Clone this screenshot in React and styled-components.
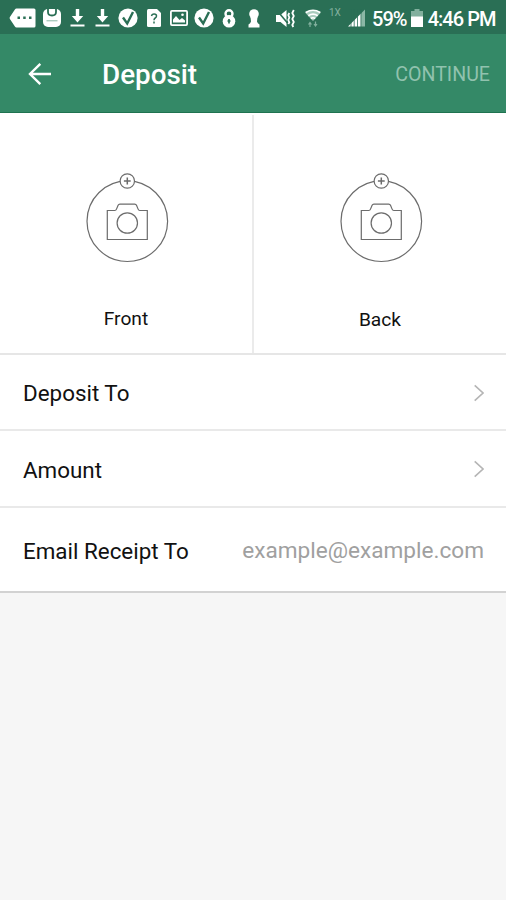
import React from "react"
import styled, { createGlobalStyle } from "styled-components"

const DownloadIcon = ({ left }) => (
    <StatusIcon width="15" height="18" viewBox="0 0 15 18" $left={left}>
        <path d="M5.800 0h3.400v7h4L7.500 13.500 1.800 7h4zM.5 15.500h14v2H.5z" fill="#fff" />
    </StatusIcon>
)

const CheckIcon = ({ left }) => (
    <StatusIcon width="20" height="20" viewBox="0 0 20 20" $left={left}>
        <circle cx="10" cy="10" r="9.600" fill="#fff" />
        <path d="M5 9.500l4.200 6L15 4" fill="none" stroke="#2a6f55" strokeWidth="2.400" />
    </StatusIcon>
)

const CameraIcon = () => (
    <svg width="85" height="92" viewBox="0 0 85 92" fill="none" stroke="#6c6c6c" strokeWidth="1.200">
        <circle cx="43.300" cy="50.200" r="40.300" />
        <path d="M23.300 39.500h7.500q1.200 0 1.700-1.400l1.600-3.800q.5-1.200 1.800-1.200h14.800q1.300 0 1.800 1.200l1.600 3.800q.5 1.400 1.700 1.400h7.500v29h-40z" />
        <circle cx="43.300" cy="52" r="10.200" />
        <circle cx="43.300" cy="10" r="7.200" fill="#fff" />
        <path d="M39.900 10h6.800M43.300 6.600v6.800" strokeWidth="1.500" />
    </svg>
)

const ChevronIcon = () => (
    <svg width="11" height="18" viewBox="0 0 11 18">
        <path d="M1.700 1.400L10 9l-8.300 7.600" fill="none" stroke="#b5b5b5" strokeWidth="1.600" />
    </svg>
)

const StatusIcons = () => (
    <>
        <StatusIcon width="27" height="20" viewBox="0 0 27 20" $left={9}>
            <path
                d="M7.500.5H25q1.500 0 1.500 1.500v16q0 1.500-1.500 1.500H7.500q-1 0-1.600-1L.9 11q-.6-1 0-2l5-7.500q.6-1 1.600-1z"
                fill="#fff"
            />
            <path d="M8.500 8.500h2.500v2.500H8.500zM14.200 8.500h2.500v2.500h-2.500zM20 8.500h2.500v2.500H20z" fill="#2a6f55" />
        </StatusIcon>
        <StatusIcon width="18" height="18" viewBox="0 0 18 18" $left={7}>
            <rect width="18" height="18" rx="5" fill="#fff" />
            <path d="M5 0v3q0 3.500 4 3.500T13 3V0" fill="none" stroke="#2a6f55" strokeWidth="1.800" />
            <path d="M3.500 11.800h11" stroke="#8bb7a5" />
        </StatusIcon>
        <DownloadIcon left={9} />
        <DownloadIcon left={10} />
        <CheckIcon left={8} />
        <StatusIcon width="14" height="18" viewBox="0 0 14 18" $left={9}>
            <path d="M1.500 0H10l4 4v12.500q0 1.500-1.500 1.500h-11Q0 18 0 16.500v-15Q0 0 1.500 0z" fill="#fff" />
            <path
                d="M4.500 7q.4-2 2.600-2 2.400 0 2.400 2 0 1.300-1.300 2-1.200.7-1.200 2.200M7 12.500v2"
                fill="none"
                stroke="#2a6f55"
                strokeWidth="1.500"
            />
        </StatusIcon>
        <StatusIcon width="18" height="16" viewBox="0 0 18 16" $left={9}>
            <rect x=".9" y=".9" width="16.200" height="14.200" rx="1" fill="none" stroke="#fff" strokeWidth="1.800" />
            <path d="M3 12.500v-3l3-3.500 3.500 4 2.500-2 3 2.500v2z" fill="#fff" />
            <circle cx="12.500" cy="4.800" r="1.300" fill="#fff" />
        </StatusIcon>
        <CheckIcon left={6} />
        <StatusIcon width="14" height="19" viewBox="0 0 14 19" $left={8}>
            <circle cx="7" cy="4.800" r="3.500" fill="none" stroke="#fff" strokeWidth="2.400" />
            <circle cx="7" cy="12.300" r="6.300" fill="#fff" />
            <path d="M7 10v4.500M5.500 12h3" stroke="#2a6f55" strokeWidth="1.700" />
        </StatusIcon>
        <StatusIcon width="12" height="19" viewBox="0 0 12 19" $left={12}>
            <circle cx="6" cy="5" r="4.800" fill="#fff" />
            <path d="M2.500 8h7l-.5 4.500q.5 2 2.500 3v3H.5v-3q2-1 2.500-3z" fill="#fff" />
        </StatusIcon>
        <StatusIcon width="20" height="19" viewBox="0 0 20 19" $left={16}>
            <path d="M0 6h4.500l6-5v17l-6-5H0z" fill="#fff" />
            <path d="M1 1.500L14 17" stroke="#2a6f55" strokeWidth="1.600" />
            <path
                d="M13.300 4l-1 2 1 2.500-1 2.500 1 2.500-1 1.500M17.800 1l-1.500 3 1.500 3-1.500 3 1.500 3-1.500 3 1 2"
                fill="none"
                stroke="#fff"
                strokeWidth="1.800"
            />
        </StatusIcon>
        <StatusIcon width="16" height="19" viewBox="0 0 16 19" $left={9}>
            <path d="M0 3.500Q8-1.500 16 3.500L8 12z" fill="#a9cbbd" />
            <path
                d="M.8 3.500Q8-1 15.200 3.500M3.300 6.700q4.700-3 9.400 0M5.800 9.500q2.200-1.500 4.400 0"
                fill="none"
                stroke="#fff"
                strokeWidth="1.700"
            />
            <path
                d="M5 18v-4.500M3.500 15.500l1.500-2 1.500 2M10.500 12.500V17M9 15l1.500 2 1.500-2"
                fill="none"
                stroke="#82b09e"
                strokeWidth="1.200"
            />
        </StatusIcon>
    </>
)

const rows = [
    { label: "Deposit To", height: 76 },
    { label: "Amount", height: 77 },
    { label: "Email Receipt To", height: 85, placeholder: "example@example.com" },
]

const App = () => {
    return (
        <Page>
            <GlobalStyle />
            <StatusBar>
                <StatusIcons />
                <Network>1X</Network>
                <StatusIcon width="17" height="18" viewBox="0 0 17 18" $left={7}>
                    <path d="M0 17.500L13 4.500v13z" fill="#fff" />
                    <path d="M13 17.500v-13l4-4v17z" fill="#8bb7a5" />
                    <path d="M3 18V0M6.200 18V0M9.500 18V0M12.900 18V0" stroke="#2a6f55" strokeWidth=".8" />
                </StatusIcon>
                <StatusText $left={7}>59%</StatusText>
                <StatusIcon width="12" height="18" viewBox="0 0 12 18" $left={4}>
                    <path d="M3.500 0h5v2H12v6H0V2h3.500z" fill="#82b09e" />
                    <path d="M0 7.500h12V18H0z" fill="#fff" />
                </StatusIcon>
                <StatusText $left={5}>4:46 PM</StatusText>
            </StatusBar>

            <Header>
                <BackButton aria-label="Back">
                    <svg width="24" height="24" viewBox="0 0 24 24">
                        <path
                            d="M24 12H3.500M13.300 1.800L3 12l10.300 10.200"
                            fill="none"
                            stroke="#fff"
                            strokeWidth="2.400"
                        />
                    </svg>
                </BackButton>
                <Title>Deposit</Title>
                <ContinueButton>CONTINUE</ContinueButton>
            </Header>

            <Photos>
                <PhotoCell>
                    <CameraIcon />
                    <PhotoLabel>Front</PhotoLabel>
                </PhotoCell>
                <Divider />
                <PhotoCell>
                    <CameraIcon />
                    <PhotoLabel $top={46}>Back</PhotoLabel>
                </PhotoCell>
            </Photos>

            <main>
                {rows.map((row) => (
                    <Row key={row.label} $height={row.height} $last={!!row.placeholder}>
                        <RowLabel>{row.label}</RowLabel>
                        {row.placeholder ? (
                            <Placeholder>{row.placeholder}</Placeholder>
                        ) : (
                            <ChevronIcon />
                        )}
                    </Row>
                ))}
            </main>
        </Page>
    )
}

const GlobalStyle = createGlobalStyle`
    * {
        box-sizing: border-box;
    }

    body {
        margin: 0;
        background: #f6f6f6;
    }

    svg {
        display: block;
        flex-shrink: 0;
    }
`

const Page = styled.div`
    width: 506px;
    height: 900px;
    overflow: hidden;
    background: #f6f6f6;
    font-family: Roboto, sans-serif;
    color: #111;
`

const StatusBar = styled.div`
    display: flex;
    align-items: center;
    height: 34px;
    padding-top: 2px;
    background: #2a6f55;
    white-space: nowrap;
`

const StatusIcon = styled.svg`
    margin-left: ${({ $left }) => $left}px;
`

const Network = styled.span`
    width: 12px;
    margin-left: 8px;
    padding-bottom: 10px;
    font-size: 10px;
    line-height: 12px;
    color: #82b09e;
`

const StatusText = styled.span`
    margin-left: ${({ $left }) => $left}px;
    padding-top: 2px;
    font-size: 20px;
    font-weight: 500;
    letter-spacing: -0.95px;
    line-height: 24px;
    color: #fff;
`

const Header = styled.header`
    display: flex;
    align-items: center;
    height: 79px;
    padding: 1px 16px 0 27px;
    border-bottom: 1px solid #1f7350;
    background: #348967;
`

const BackButton = styled.button`
    padding: 0;
    border: none;
    background: none;
`

const Title = styled.h1`
    margin: 2px 0 0 51px;
    font-size: 27.8px;
    font-weight: 500;
    line-height: 32px;
    color: #fff;
`

const ContinueButton = styled.button`
    margin-left: auto;
    padding: 2px 0 0;
    border: none;
    background: none;
    font-family: inherit;
    font-size: 19.6px;
    line-height: 24px;
    color: #91c2ae;
`

const Photos = styled.section`
    display: flex;
    height: 242px;
    border-bottom: 2px solid #e6e6e6;
    background: #fff;
`

const PhotoCell = styled.div`
    display: flex;
    flex: 1;
    flex-direction: column;
    align-items: center;
    padding-top: 58px;
`

const PhotoLabel = styled.span`
    margin-top: ${({ $top = 45 }) => $top}px;
    font-size: 19.2px;
    line-height: 22px;
`

const Divider = styled.div`
    width: 2px;
    margin-top: 2px;
    background: #ebebeb;
`

const Row = styled.div`
    display: flex;
    align-items: center;
    justify-content: space-between;
    height: ${({ $height }) => $height}px;
    padding: 1px 22px 0 23px;
    border-bottom: 2px solid ${({ $last }) => ($last ? "#d2d2d2" : "#e9e9e9")};
    background: #fff;
`

const RowLabel = styled.span`
    padding-top: 1px;
    font-size: 22.4px;
    line-height: 28px;
`

const Placeholder = styled(RowLabel)`
    font-size: 22.6px;
    color: #a0a0a0;
`

export default App
